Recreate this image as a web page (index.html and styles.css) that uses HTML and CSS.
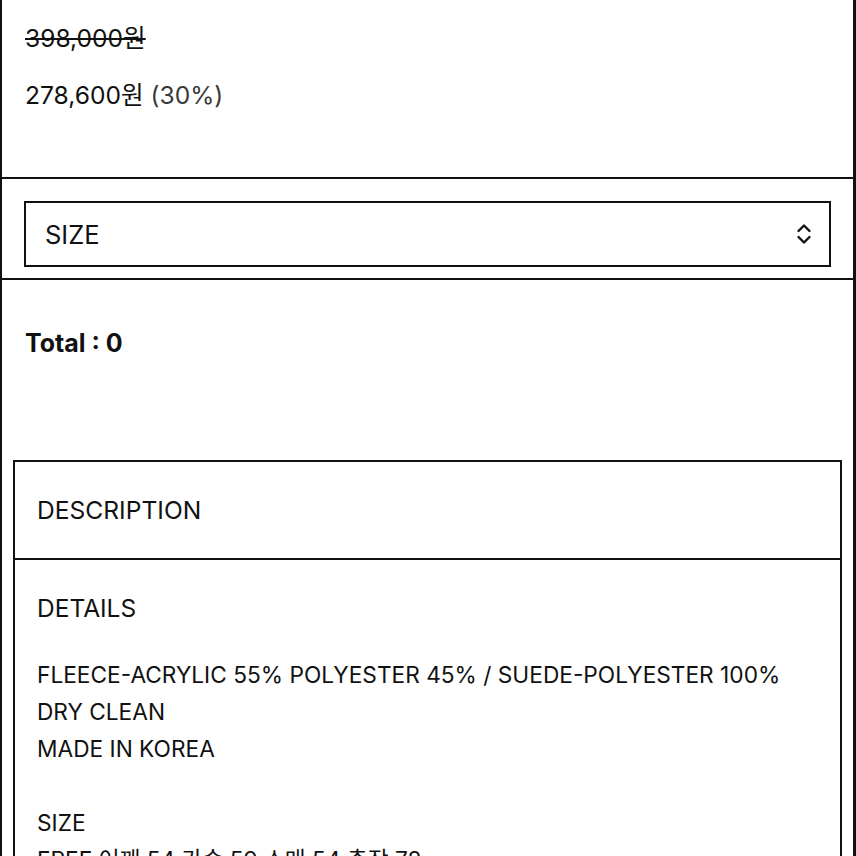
FILE: index.html
```html
<!DOCTYPE html>
<html lang="ko">
<head>
    <meta charset="UTF-8">
    <meta name="viewport" content="width=device-width, initial-scale=1.0">
    <title>Product</title>
    <link rel="stylesheet" href="styles.css">
</head>
<body>
    <div class="product">
        <div class="price-box">
            <p class="price-old">398,000원</p>
            <p class="price-now">278,600원 <span class="rate">(30%)</span></p>
        </div>

        <div class="option-box">
            <div class="select">
                <span>SIZE</span>
                <svg class="chevrons" width="16" height="22" viewBox="0 0 16 22">
                    <path d="M2.5 8 L8 2.5 L13.5 8" fill="none" stroke="#111" stroke-width="2.4" stroke-linecap="round" stroke-linejoin="round"/>
                    <path d="M2.5 14 L8 19.5 L13.5 14" fill="none" stroke="#111" stroke-width="2.4" stroke-linecap="round" stroke-linejoin="round"/>
                </svg>
            </div>
        </div>

        <div class="total-box">
            <strong>Total : 0</strong>
        </div>

        <div class="desc">
            <div class="desc-head">DESCRIPTION</div>
            <div class="desc-body">
                <p class="desc-title">DETAILS</p>
                <p>FLEECE-ACRYLIC 55% POLYESTER 45% / SUEDE-POLYESTER 100%<br>
                DRY CLEAN<br>
                MADE IN KOREA<br>
                <br>
                SIZE<br>
                FREE 어깨 54 가슴 59 소매 54 총장 78</p>
            </div>
        </div>
    </div>
</body>
</html>
```

FILE: styles.css
```css
body {
    margin: 0;
    font-family: Inter, 'Noto Sans CJK KR', sans-serif;
    color: #111;
    background: #fff;
}
p {
    margin: 0;
}
.product {
    border-left: 2px solid #111;
    border-right: 3px solid #111;
    min-height: 900px;
}
.price-box {
    height: 179px;
    padding: 0 0 0 23px;
    font-size: 24.6px;
    border-bottom: 2px solid #111;
    box-sizing: border-box;
}
.price-old {
    text-decoration: line-through;
    text-decoration-thickness: 2px;
    padding-top: 22px;
    line-height: 32px;
}
.price-now {
    margin-top: 25px;
    line-height: 32px;
}
.rate {
    color: #3a3a3a;
}
.option-box {
    padding: 22px 22px 11px;
    border-bottom: 2px solid #111;
}
.select {
    height: 66px;
    border: 2px solid #111;
    box-sizing: border-box;
    display: flex;
    align-items: center;
    justify-content: space-between;
    padding: 0 17px 0 19px;
    font-size: 25.5px;
}
.select span {
    margin-top: 1px;
}
.total-box {
    padding: 48px 23px 0;
    height: 180px;
    box-sizing: border-box;
    font-size: 25px;
}
.desc {
    margin: 0 11px;
    border: 2px solid #111;
}
.desc-head {
    height: 96px;
    display: flex;
    align-items: center;
    padding-left: 22px;
    font-size: 24.6px;
    border-bottom: 2px solid #111;
}
.desc-body {
    padding: 30px 22px 0;
    font-size: 22.7px;
    line-height: 37px;
}
.desc-title {
    font-size: 24.5px;
    margin-bottom: 29px;
}
```
